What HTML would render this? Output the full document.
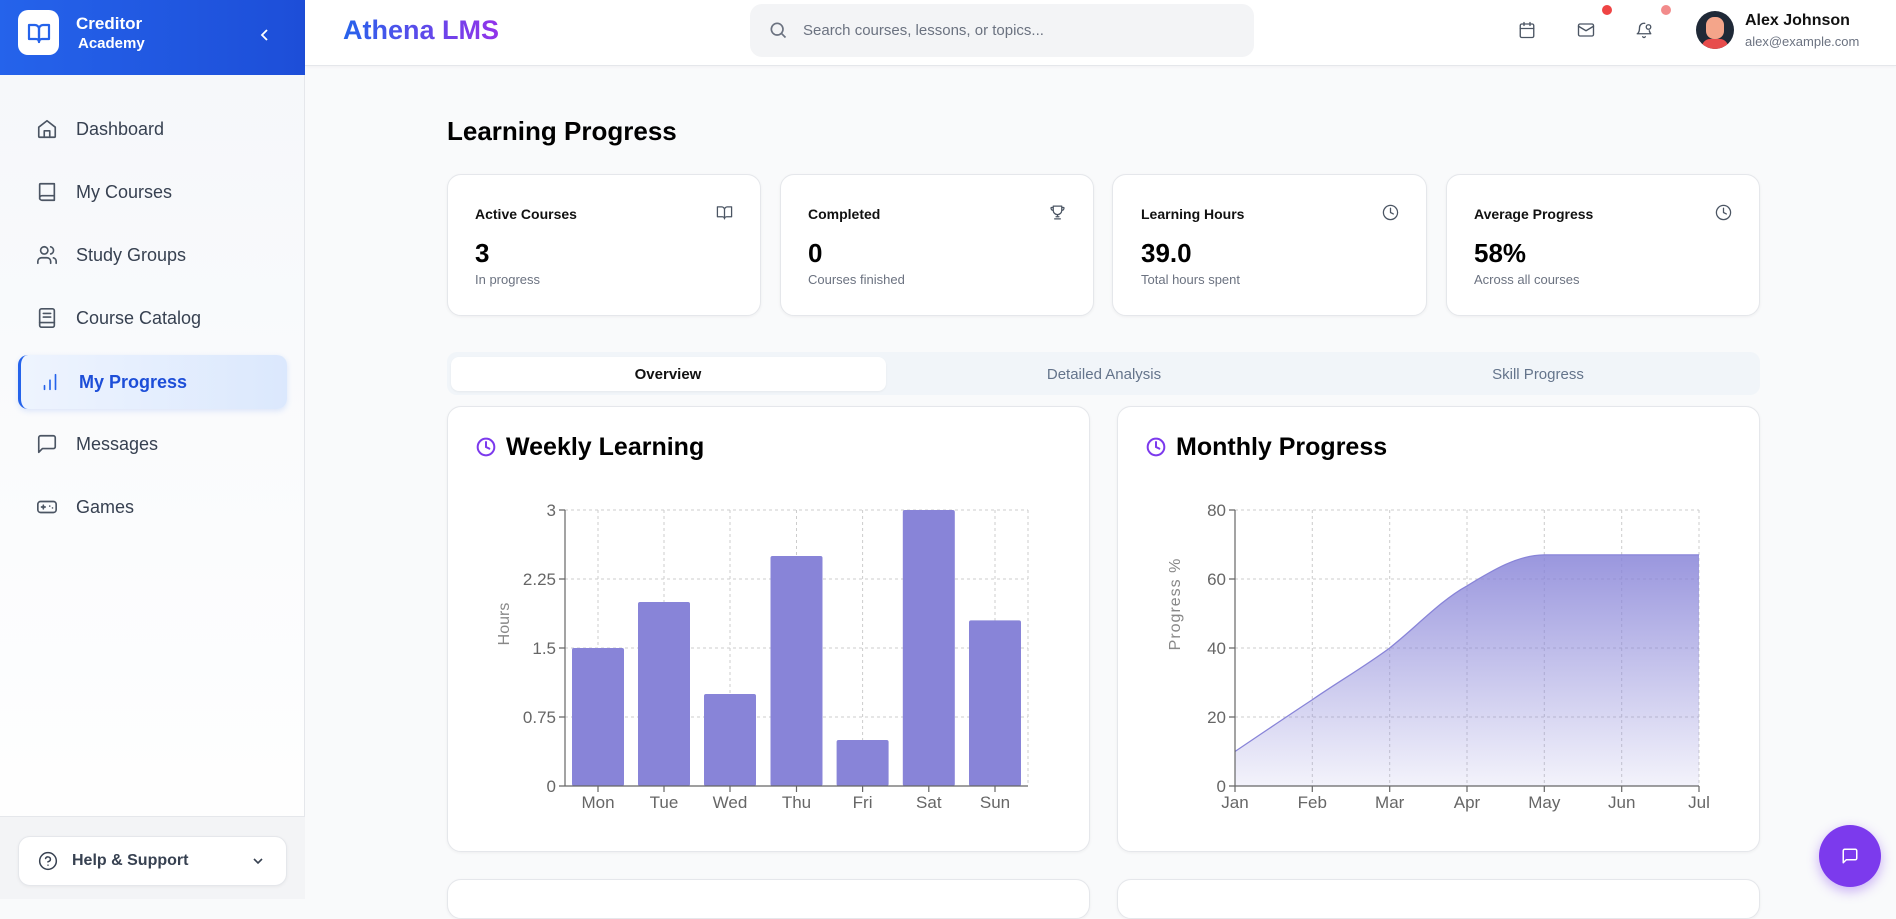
<!DOCTYPE html>
<html><head><meta charset="utf-8"><style>
*{box-sizing:border-box;margin:0;padding:0}
body{width:1896px;height:899px;overflow:hidden;font-family:"Liberation Sans",sans-serif;background:#f9fafb;position:relative;color:#111}
.abs{position:absolute}
.side{left:0;top:0;width:305px;height:899px;background:linear-gradient(180deg,#f5f7fa,#fff);border-right:1px solid #e5e7eb}
.sidehead{left:0;top:0;width:305px;height:75px;background:linear-gradient(90deg,#2563eb,#1d4ed8)}
.nav{left:36px;font-size:18px;color:#374151;display:flex;align-items:center;height:30px}
.nav svg{width:22px;height:22px;margin-right:18px;stroke:#4b5563;fill:none;stroke-width:1.8;stroke-linecap:round;stroke-linejoin:round}
.card{background:#fff;border:1px solid #e5e7eb;border-radius:14px;box-shadow:0 1px 3px rgba(0,0,0,.05)}
.ct{font-size:14px;font-weight:bold;color:#111}
.cv{font-size:26px;font-weight:bold;color:#000}
.cs{font-size:13px;color:#6b7280}
.ic{stroke:#4b5563;fill:none;stroke-width:1.8;stroke-linecap:round;stroke-linejoin:round}
.tab{font-size:15px;color:#64748b;text-align:center;width:434px}
</style></head><body>
<div class="abs side"></div>
<div class="abs sidehead"></div>
<div class="abs" style="left:18px;top:10px;width:41px;height:45px;background:#fff;border-radius:10px;display:flex;align-items:center;justify-content:center">
<svg width="24" height="24" viewBox="0 0 24 24" fill="none" stroke="#2563eb" stroke-width="2.2" stroke-linejoin="round"><path d="M2 4h6a4 4 0 0 1 4 4v13a3 3 0 0 0-3-3H2z"/><path d="M22 4h-6a4 4 0 0 0-4 4v13a3 3 0 0 1 3-3h7z"/></svg></div>
<div class="abs" style="left:76px;top:14px;color:#fff;font-weight:bold;font-size:17px;line-height:19px">Creditor<br><span style="font-size:15px;padding-left:2px">Academy</span></div>
<svg class="abs" style="left:258px;top:27px" width="14" height="16" viewBox="0 0 14 16"><path d="M9 3 4 8l5 5" stroke="#fff" stroke-width="1.8" fill="none"/></svg>

<div class="abs nav" style="top:114px"><svg viewBox="0 0 24 24"><path d="M3 10 12 3l9 7v10a1 1 0 0 1-1 1H4a1 1 0 0 1-1-1z"/><path d="M9 21v-7h6v7"/></svg>Dashboard</div>
<div class="abs nav" style="top:177px"><svg viewBox="0 0 24 24"><path d="M4 19.5V4a1 1 0 0 1 1-1h15v18H6.5A2.5 2.5 0 0 1 4 18.5a2.5 2.5 0 0 1 2.5-2.5H20"/></svg>My Courses</div>
<div class="abs nav" style="top:240px"><svg viewBox="0 0 24 24"><circle cx="9" cy="7" r="4"/><path d="M2 21v-2a4 4 0 0 1 4-4h6a4 4 0 0 1 4 4v2M16 3.1a4 4 0 0 1 0 7.8M22 21v-2a4 4 0 0 0-3-3.9"/></svg>Study Groups</div>
<div class="abs nav" style="top:303px"><svg viewBox="0 0 24 24"><rect x="4" y="2" width="16" height="20" rx="2"/><path d="M8 7h8M8 11h8M4 17h16"/></svg>Course Catalog</div>
<div class="abs" style="left:18px;top:355px;width:269px;height:54px;background:linear-gradient(90deg,#eef4fe,#dbe8fd);border-left:3px solid #2563eb;border-radius:10px;box-shadow:0 2px 6px rgba(37,99,235,.15)"></div>
<div class="abs nav" style="left:39px;top:367px;color:#1d4ed8;font-weight:bold"><svg viewBox="0 0 24 24" style="stroke:#2563eb"><path d="M6 20v-4M12 20V10M18 20V4"/></svg>My Progress</div>
<div class="abs nav" style="top:429px"><svg viewBox="0 0 24 24"><path d="M21 15a2 2 0 0 1-2 2H7l-4 4V5a2 2 0 0 1 2-2h14a2 2 0 0 1 2 2z"/></svg>Messages</div>
<div class="abs nav" style="top:492px"><svg viewBox="0 0 24 24"><rect x="2" y="6" width="20" height="12" rx="3"/><path d="M6 12h4M8 10v4M15 11h.01M18 13h.01"/></svg>Games</div>
<div class="abs" style="left:0;top:816px;width:305px;height:83px;background:#f3f4f6;border-top:1px solid #e5e7eb"></div>
<div class="abs card" style="left:18px;top:836px;width:269px;height:50px;border-radius:12px;display:flex;align-items:center;padding-left:19px;font-weight:bold;font-size:16px;color:#374151">
<svg width="20" height="20" viewBox="0 0 24 24" class="ic" style="margin-right:14px;stroke:#374151"><circle cx="12" cy="12" r="10"/><path d="M9.1 9a3 3 0 0 1 5.8 1c0 2-3 3-3 3M12 17h.01"/></svg>Help &amp; Support
<svg class="abs" style="left:233px;top:19px" width="12" height="10" viewBox="0 0 12 10"><path d="M2 3l4 4 4-4" stroke="#374151" stroke-width="1.6" fill="none"/></svg></div>

<!-- header -->
<div class="abs" style="left:305px;top:0;width:1591px;height:66px;background:#fff;border-bottom:1px solid #e5e7eb;box-shadow:0 1px 3px rgba(0,0,0,.04)"></div>
<div class="abs" style="left:343px;top:15px;font-size:27px;font-weight:bold;background:linear-gradient(90deg,#2563eb,#9333ea);-webkit-background-clip:text;color:transparent">Athena LMS</div>
<div class="abs" style="left:750px;top:4px;width:504px;height:53px;background:#f3f4f6;border-radius:12px"></div>
<svg class="abs" style="left:768px;top:20px" width="20" height="20" viewBox="0 0 24 24" fill="none" stroke="#6b7280" stroke-width="2"><circle cx="11" cy="11" r="7"/><path d="m21 21-5-5"/></svg>
<div class="abs" style="left:803px;top:22px;font-size:15px;color:#6b7280">Search courses, lessons, or topics...</div>
<svg class="abs ic" style="left:1518px;top:21px" width="18" height="18" viewBox="0 0 24 24"><rect x="3" y="4" width="18" height="18" rx="2"/><path d="M16 2v4M8 2v4M3 10h18"/></svg>
<svg class="abs ic" style="left:1577px;top:21px" width="18" height="18" viewBox="0 0 24 24"><rect x="2" y="4" width="20" height="16" rx="2"/><path d="m22 7-10 6L2 7"/></svg>
<svg class="abs ic" style="left:1635px;top:21px" width="18" height="18" viewBox="0 0 24 24"><path d="M10.3 21a1.9 1.9 0 0 0 3.4 0M13 3.1A6 6 0 0 0 6 9c0 7-3 8-3 8h18s-1-1-2-4"/><circle cx="18" cy="8" r="3"/></svg>
<div class="abs" style="left:1602px;top:5px;width:10px;height:10px;border-radius:50%;background:#ef4444"></div>
<div class="abs" style="left:1661px;top:5px;width:10px;height:10px;border-radius:50%;background:#f28b8b"></div>
<div class="abs" style="left:1696px;top:11px;width:38px;height:38px;border-radius:50%;background:#1f2937;overflow:hidden">
<div class="abs" style="left:10px;top:6px;width:18px;height:22px;border-radius:8px;background:#f4a58a"></div>
<div class="abs" style="left:6px;top:28px;width:26px;height:14px;border-radius:8px 8px 0 0;background:#e74c4c"></div></div>
<div class="abs" style="left:1745px;top:12px;font-size:16px;font-weight:bold;color:#111">Alex Johnson</div>
<div class="abs" style="left:1745px;top:34px;font-size:13px;color:#6b7280">alex@example.com</div>

<!-- content -->
<div class="abs" style="left:447px;top:116px;font-size:26px;font-weight:bold;color:#000">Learning Progress</div>

<div class="abs card" style="left:447px;top:174px;width:314px;height:142px"></div>
<div class="abs card" style="left:780px;top:174px;width:314px;height:142px"></div>
<div class="abs card" style="left:1112px;top:174px;width:315px;height:142px"></div>
<div class="abs card" style="left:1446px;top:174px;width:314px;height:142px"></div>
<div class="abs ct" style="left:475px;top:206px">Active Courses</div>
<div class="abs ct" style="left:808px;top:206px">Completed</div>
<div class="abs ct" style="left:1141px;top:206px">Learning Hours</div>
<div class="abs ct" style="left:1474px;top:206px">Average Progress</div>
<div class="abs cv" style="left:475px;top:238px">3</div>
<div class="abs cv" style="left:808px;top:238px">0</div>
<div class="abs cv" style="left:1141px;top:238px">39.0</div>
<div class="abs cv" style="left:1474px;top:238px">58%</div>
<div class="abs cs" style="left:475px;top:272px">In progress</div>
<div class="abs cs" style="left:808px;top:272px">Courses finished</div>
<div class="abs cs" style="left:1141px;top:272px">Total hours spent</div>
<div class="abs cs" style="left:1474px;top:272px">Across all courses</div>
<svg class="abs ic" style="left:716px;top:204px" width="17" height="17" viewBox="0 0 24 24"><path d="M2 4h6a4 4 0 0 1 4 4v13a3 3 0 0 0-3-3H2zM22 4h-6a4 4 0 0 0-4 4v13a3 3 0 0 1 3-3h7z"/></svg>
<svg class="abs ic" style="left:1049px;top:204px" width="17" height="17" viewBox="0 0 24 24"><path d="M6 3h12v6a6 6 0 0 1-12 0zM6 5H3a3 3 0 0 0 3 4M18 5h3a3 3 0 0 1-3 4M12 15v3M8 21h8M10 18h4"/></svg>
<svg class="abs ic" style="left:1382px;top:204px" width="17" height="17" viewBox="0 0 24 24"><circle cx="12" cy="12" r="10"/><path d="M12 6v6l4 2"/></svg>
<svg class="abs ic" style="left:1715px;top:204px" width="17" height="17" viewBox="0 0 24 24"><circle cx="12" cy="12" r="10"/><path d="M12 6v6l4 2"/></svg>

<div class="abs" style="left:447px;top:352px;width:1313px;height:43px;background:#f1f5f9;border-radius:10px"></div>
<div class="abs" style="left:451px;top:357px;width:435px;height:34px;background:#fff;border-radius:8px;box-shadow:0 1px 2px rgba(0,0,0,.05)"></div>
<div class="abs tab" style="left:451px;top:366px;color:#111;font-weight:bold">Overview</div>
<div class="abs tab" style="left:887px;top:366px">Detailed Analysis</div>
<div class="abs tab" style="left:1321px;top:366px">Skill Progress</div>

<div class="abs card" style="left:447px;top:406px;width:643px;height:446px"></div>
<div class="abs card" style="left:1117px;top:406px;width:643px;height:446px"></div>
<div class="abs card" style="left:447px;top:879px;width:643px;height:40px"></div>
<div class="abs card" style="left:1117px;top:879px;width:643px;height:40px"></div>
<svg class="abs" style="left:476px;top:437px" width="20" height="20" viewBox="0 0 24 24" fill="none" stroke="#7c3aed" stroke-width="2.4" stroke-linecap="round"><circle cx="12" cy="12" r="10"/><path d="M12 6v6l4 2"/></svg>
<svg class="abs" style="left:1146px;top:437px" width="20" height="20" viewBox="0 0 24 24" fill="none" stroke="#7c3aed" stroke-width="2.4" stroke-linecap="round"><circle cx="12" cy="12" r="10"/><path d="M12 6v6l4 2"/></svg>
<div class="abs" style="left:506px;top:433px;font-size:25px;font-weight:bold;color:#000">Weekly Learning</div>
<div class="abs" style="left:1176px;top:433px;font-size:25px;font-weight:bold;color:#000">Monthly Progress</div>

<svg class="abs" style="left:0;top:0" width="1896" height="899" font-family="Liberation Sans,sans-serif" font-size="17" fill="#666">
<defs><linearGradient id="g" x1="0" y1="0" x2="0" y2="1"><stop offset="0" stop-color="#8884d8" stop-opacity=".85"/><stop offset="1" stop-color="#8884d8" stop-opacity=".1"/></linearGradient></defs>
<g stroke="#ccc" stroke-dasharray="3 3">
<path d="M565 510H1028M565 579H1028M565 648H1028M565 717H1028M598 510V786M664 510V786M730 510V786M796.5 510V786M862.6 510V786M928.8 510V786M995 510V786M1028 510V786"/>
<path d="M1235 510H1699M1235 579H1699M1235 648H1699M1235 717H1699M1312.3 510V786M1389.7 510V786M1467 510V786M1544.3 510V786M1621.7 510V786M1699 510V786"/>
</g>
<g fill="#8884d8">
<rect x="572" y="648" width="52" height="138" rx="2"/>
<rect x="638" y="602" width="52" height="184" rx="2"/>
<rect x="704" y="694" width="52" height="92" rx="2"/>
<rect x="770.5" y="556" width="52" height="230" rx="2"/>
<rect x="836.6" y="740" width="52" height="46" rx="2"/>
<rect x="902.8" y="510" width="52" height="276" rx="2"/>
<rect x="969" y="620.4" width="52" height="165.6" rx="2"/>
</g>
<path d="M565 510V786H1028M559 510H565M559 579H565M559 648H565M559 717H565M559 786H565M598 786v6M664 786v6M730 786v6M796.5 786v6M862.6 786v6M928.8 786v6M995 786v6" stroke="#666" stroke-width="1.2" fill="none"/>
<g text-anchor="end"><text x="556" y="516">3</text><text x="556" y="585">2.25</text><text x="556" y="654">1.5</text><text x="556" y="723">0.75</text><text x="556" y="792">0</text></g>
<g text-anchor="middle"><text x="598" y="808">Mon</text><text x="664" y="808">Tue</text><text x="730" y="808">Wed</text><text x="796.5" y="808">Thu</text><text x="862.6" y="808">Fri</text><text x="928.8" y="808">Sat</text><text x="995" y="808">Sun</text></g>
<text x="0" y="0" transform="translate(509 624) rotate(-90)" text-anchor="middle" font-size="16" fill="#888">Hours</text>

<path d="M1235 751.5C1261 734 1286 717 1312.3 699.75C1338 682 1364 667 1389.7 648C1415 628 1441 600 1467 585.9C1493 570 1518 555 1544.3 554.85L1699 554.85V786H1235Z" fill="url(#g)"/>
<path d="M1235 751.5C1261 734 1286 717 1312.3 699.75C1338 682 1364 667 1389.7 648C1415 628 1441 600 1467 585.9C1493 570 1518 555 1544.3 554.85L1699 554.85" fill="none" stroke="#8884d8" stroke-width="1.3"/>
<path d="M1235 510V786H1699M1229 510H1235M1229 579H1235M1229 648H1235M1229 717H1235M1229 786H1235M1235 786v6M1312.3 786v6M1389.7 786v6M1467 786v6M1544.3 786v6M1621.7 786v6M1699 786v6" stroke="#666" stroke-width="1.2" fill="none"/>
<g text-anchor="end"><text x="1226" y="516">80</text><text x="1226" y="585">60</text><text x="1226" y="654">40</text><text x="1226" y="723">20</text><text x="1226" y="792">0</text></g>
<g text-anchor="middle"><text x="1235" y="808">Jan</text><text x="1312.3" y="808">Feb</text><text x="1389.7" y="808">Mar</text><text x="1467" y="808">Apr</text><text x="1544.3" y="808">May</text><text x="1621.7" y="808">Jun</text><text x="1699" y="808">Jul</text></g>
<text x="0" y="0" transform="translate(1180 604) rotate(-90)" text-anchor="middle" font-size="16" fill="#888" letter-spacing="1">Progress %</text>
</svg>

<div class="abs" style="left:1819px;top:825px;width:62px;height:62px;border-radius:50%;background:#7c3aed;box-shadow:0 4px 12px rgba(124,58,237,.4);display:flex;align-items:center;justify-content:center">
<svg width="18" height="18" viewBox="0 0 24 24" fill="none" stroke="#fff" stroke-width="2" stroke-linejoin="round"><path d="M21 15a2 2 0 0 1-2 2H7l-4 4V5a2 2 0 0 1 2-2h14a2 2 0 0 1 2 2z"/></svg></div>
</body></html>
